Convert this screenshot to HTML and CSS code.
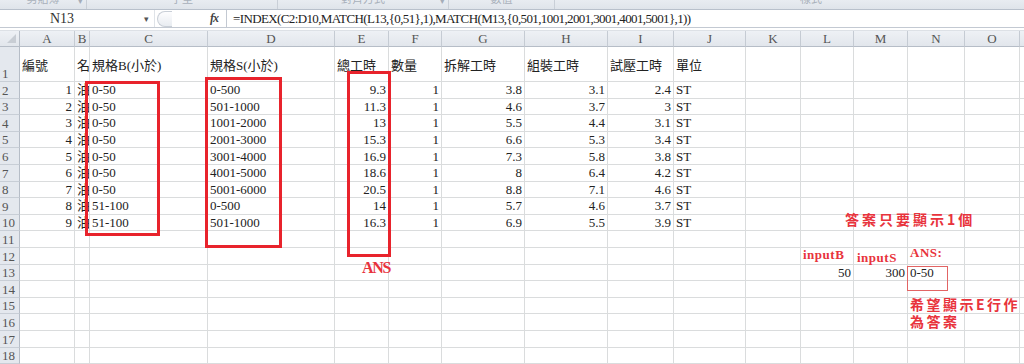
FILE: index.html
```html
<!DOCTYPE html>
<html lang="zh-Hant">
<head>
    <meta charset="UTF-8">
    <title>工時表</title>
    <link rel="stylesheet" href="styles.css">
</head>
<body>
    <div class="ribbon-foot">
        <div class="group" style="width: 87px"><span>剪貼簿</span><i>&#9662;</i></div>
        <div class="group" style="width: 191px"><span>字型</span></div>
        <div class="group" style="width: 171px"><span>對齊方式</span><i>&#9662;</i></div>
        <div class="group" style="width: 106px"><span>數值</span></div>
        <div class="group last"><span>樣式</span></div>
    </div>

    <div class="formula-bar">
        <div class="name-box">
            <span>N13</span>
            <i class="name-arrow">&#9662;</i>
        </div>
        <div class="splitter"><span></span></div>
        <div class="fx">fx</div>
        <div class="formula">=INDEX(C2:D10,MATCH(L13,{0,51},1),MATCH(M13,{0,501,1001,2001,3001,4001,5001},1))</div>
    </div>

    <div class="sheet-area">
        <div class="sheet" id="sheet"></div>

        <!-- drawn shapes on top of the sheet -->
        <div class="mark box-c"></div>
        <div class="mark box-d"></div>
        <div class="mark box-e"></div>
        <div class="note ans-e">ANS</div>
        <div class="note note-top">答案只要顯示1個</div>
        <div class="note label input-b">inputB</div>
        <div class="note label input-s">inputS</div>
        <div class="note label ans-n">ANS:</div>
        <div class="mark thin box-n"></div>
        <div class="note note-bottom">希望顯示E行作<br>為答案</div>
    </div>

    <script>
        const columns = [
            ['A', 55], ['B', 15], ['C', 118], ['D', 127], ['E', 54], ['F', 53],
            ['G', 83], ['H', 83], ['I', 66], ['J', 72], ['K', 55], ['L', 53],
            ['M', 54], ['N', 57], ['O', 55], ['P', 40]
        ];

        const rows = {
            1: ['編號', '名稱', '規格B(小於)', '規格S(小於)', '總工時', '數量', '拆解工時', '組裝工時', '試壓工時', '單位'],
            2: [1, '油壓缸', '0-50', '0-500', 9.3, 1, 3.8, 3.1, 2.4, 'ST'],
            3: [2, '油壓缸', '0-50', '501-1000', 11.3, 1, 4.6, 3.7, 3, 'ST'],
            4: [3, '油壓缸', '0-50', '1001-2000', 13, 1, 5.5, 4.4, 3.1, 'ST'],
            5: [4, '油壓缸', '0-50', '2001-3000', 15.3, 1, 6.6, 5.3, 3.4, 'ST'],
            6: [5, '油壓缸', '0-50', '3001-4000', 16.9, 1, 7.3, 5.8, 3.8, 'ST'],
            7: [6, '油壓缸', '0-50', '4001-5000', 18.6, 1, 8, 6.4, 4.2, 'ST'],
            8: [7, '油壓缸', '0-50', '5001-6000', 20.5, 1, 8.8, 7.1, 4.6, 'ST'],
            9: [8, '油壓缸', '51-100', '0-500', 14, 1, 5.7, 4.6, 3.7, 'ST'],
            10: [9, '油壓缸', '51-100', '501-1000', 16.3, 1, 6.9, 5.5, 3.9, 'ST'],
            13: [null, null, null, null, null, null, null, null, null, null, null, 50, 300, '0-50']
        };

        const sheet = document.getElementById('sheet');
        sheet.style.gridTemplateColumns = '20px ' + columns.map(c => c[1] + 'px').join(' ');

        function addCell(className, text) {
            const cell = document.createElement('div');
            cell.className = className;
            if (text !== null && text !== undefined) cell.textContent = text;
            sheet.appendChild(cell);
        }

        // column headers
        addCell('corner');
        columns.forEach(c => addCell('col-head', c[0]));

        // rows
        for (let r = 1; r <= 18; r++) {
            addCell('row-head' + (r === 1 ? ' tall' : ''), r);
            const values = rows[r] || [];
            columns.forEach((c, i) => {
                const value = values[i];
                let cls = 'cell';
                if (r === 1) cls += ' tall';
                if (typeof value === 'number') cls += ' num';
                addCell(cls, value);
            });
        }
    </script>
</body>
</html>
```

FILE: styles.css
```css
body {
    margin: 0;
    padding: 0;
    width: 1024px;
    height: 364px;
    overflow: hidden;
    background-color: #fff;
    font-family: 'Liberation Serif', 'Noto Sans CJK TC', serif;
    font-size: 13px;
    color: #222;
}

/* bottom edge of the ribbon, group captions cut off */
.ribbon-foot {
    height: 9px;
    display: flex;
    background: linear-gradient(#e8ecf1, #dfe4ea);
    border-bottom: 1px solid #b8c0cb;
    overflow: hidden;
}

.ribbon-foot .group {
    position: relative;
    border-right: 1px solid #c9cfd7;
    box-sizing: border-box;
    text-align: center;
    font-family: 'Noto Sans CJK TC', sans-serif;
    font-size: 11px;
    line-height: 11px;
    color: #a8b0ba;
}

.ribbon-foot .group span {
    position: relative;
    top: -7px;
}

.ribbon-foot .group i {
    position: absolute;
    right: 3px;
    top: -5px;
    font-style: normal;
    font-size: 9px;
    color: #a5adb8;
}

.ribbon-foot .group.last {
    flex-grow: 1;
    border-right: none;
    text-align: left;
    padding-left: 245px;
}

.formula-bar {
    height: 17px;
    display: flex;
    align-items: stretch;
    background-color: #fff;
    border-bottom: 1px solid #c3c9d2;
}

.name-box {
    width: 155px;
    display: flex;
    align-items: center;
    box-sizing: border-box;
    border-right: 1px solid #dfe3e8;
    position: relative;
}

.name-box span {
    flex-grow: 1;
    text-align: center;
    padding-right: 20px;
    font-size: 14px;
    color: #333;
}

.name-arrow {
    font-style: normal;
    font-size: 9px;
    color: #555;
    margin-right: 5px;
}

.splitter {
    width: 55px;
    display: flex;
    align-items: center;
}

.splitter span {
    width: 14px;
    height: 14px;
    margin-left: 2px;
    border: 1px solid #c9cfd7;
    border-right: none;
    border-radius: 8px 0 0 8px;
    background: linear-gradient(#fdfdfe, #e8ecf1);
}

.fx {
    width: 16px;
    border-right: 1px solid #c3c9d2;
    font-style: italic;
    font-weight: bold;
    font-size: 12px;
    line-height: 17px;
    color: #444;
    letter-spacing: -1px;
}

.formula {
    padding-left: 6px;
    line-height: 18px;
    font-size: 13px;
    color: #222;
    white-space: nowrap;
    letter-spacing: -0.62px;
}

.sheet-area {
    position: relative;
    margin-top: 2px;
    border-top: 1px solid #dde1e6;
}

.sheet {
    display: grid;
    grid-template-rows: 16px 35px repeat(17, 16.6px);
}

.corner,
.col-head,
.row-head {
    background: linear-gradient(#eef1f5, #e2e6ec);
    color: #555;
    box-sizing: border-box;
}

.corner {
    border-right: 1px solid #b6bdc7;
    border-bottom: 1px solid #b6bdc7;
    position: relative;
}

.corner::after {
    content: '';
    position: absolute;
    right: 3px;
    bottom: 3px;
    border-left: 9px solid transparent;
    border-bottom: 9px solid #c8cdd4;
}

.col-head {
    text-align: center;
    line-height: 16px;
    border-right: 1px solid #c5cbd3;
    border-bottom: 1px solid #b6bdc7;
    font-size: 13px;
}

.row-head {
    background: #e4e8ee;
    border-right: 1px solid #b6bdc7;
    border-bottom: 1px solid #c8ced6;
    padding-left: 2px;
    display: flex;
    align-items: flex-end;
    font-size: 13px;
    line-height: 15px;
}

.cell {
    box-sizing: border-box;
    border-right: 1px solid #dadcdd;
    border-bottom: 1px solid #dadcdd;
    padding: 0 2px;
    white-space: nowrap;
    overflow: hidden;
    line-height: 15px;
    display: flex;
    align-items: center;
}

.cell.tall {
    padding-top: 3px;
}

.cell.num {
    justify-content: flex-end;
}

/* drawn rectangles and red notes */
.mark {
    position: absolute;
    box-sizing: border-box;
    border: 3px solid #e8232c;
}

.mark.thin {
    border: 1px solid #e26464;
}

.box-c { left: 85px; top: 50px; width: 75px; height: 155px; }
.box-d { left: 205px; top: 46px; width: 77px; height: 171px; }
.box-e { left: 347px; top: 40px; width: 44px; height: 186px; }
.box-n { left: 907px; top: 235px; width: 41px; height: 25px; }

.note {
    position: absolute;
    color: #e8333c;
    white-space: nowrap;
}

.ans-e {
    left: 362px;
    top: 228px;
    font-size: 16px;
    font-weight: bold;
    letter-spacing: -1.3px;
}

.note-top,
.note-bottom {
    font-family: 'Noto Sans CJK TC', sans-serif;
    font-size: 14px;
    font-weight: bold;
    letter-spacing: 3px;
}

.note-top {
    left: 845px;
    top: 178px;
}

.note-bottom {
    left: 910px;
    top: 265px;
    line-height: 17px;
    letter-spacing: 2.5px;
}

.label {
    font-weight: bold;
    font-size: 13px;
    letter-spacing: 0.5px;
}

.input-b { left: 803px; top: 216px; }
.input-s { left: 857px; top: 219px; }
.ans-n { left: 910px; top: 214px; }
```
